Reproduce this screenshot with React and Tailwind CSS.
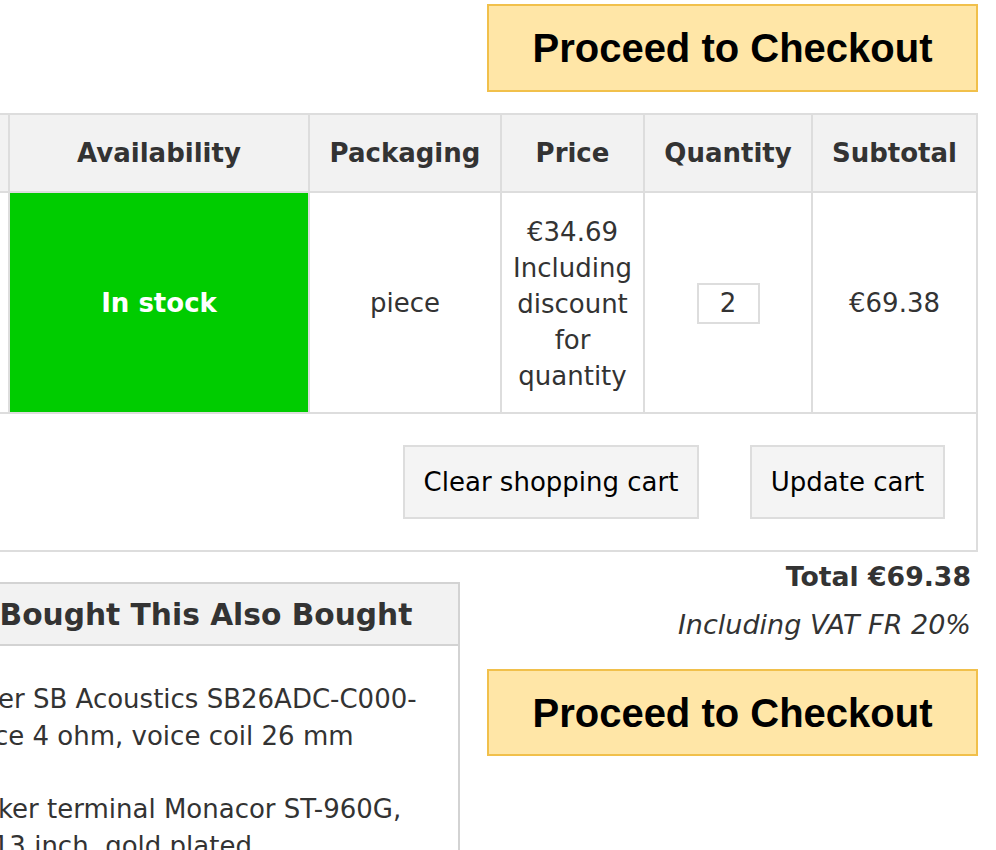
export default function App() {
  return (
    <div className="w-[996px] h-[850px] overflow-hidden bg-white font-['DejaVu_Sans',sans-serif] text-[#333333] text-[26px]">
      <div className="flex justify-end pr-[18px] pt-[4px]">
        <button className="w-[491px] h-[88px] border-2 border-[#f1c04b] bg-[#ffe6a7] text-[40px] font-bold text-black font-['Liberation_Sans',Arial,sans-serif]">
          Proceed to Checkout
        </button>
      </div>

      <div className="ml-[-60px] mt-[21px] w-[1038px] grid grid-cols-[66px_298px_190px_141px_166px_163px] grid-rows-[76px_219px_136px] gap-[2px] p-[2px] bg-[#dddddd]">
        <div className="bg-[#f2f2f2]"></div>
        <div className="bg-[#f2f2f2] flex items-center justify-center font-bold">Availability</div>
        <div className="bg-[#f2f2f2] flex items-center justify-center font-bold">Packaging</div>
        <div className="bg-[#f2f2f2] flex items-center justify-center font-bold">Price</div>
        <div className="bg-[#f2f2f2] flex items-center justify-center font-bold">Quantity</div>
        <div className="bg-[#f2f2f2] flex items-center justify-center font-bold">Subtotal</div>

        <div className="bg-white"></div>
        <div className="bg-[#00cc00] flex items-center justify-center font-bold text-white pt-[2px]">In stock</div>
        <div className="bg-white flex items-center justify-center pt-[2px]">piece</div>
        <div className="bg-white flex items-center justify-center text-center leading-[36px] px-[8px] pt-[2px]">
          <div>
            <div>€34.69</div>
            <div>Including discount for quantity</div>
          </div>
        </div>
        <div className="bg-white flex items-center justify-center pt-[2px]">
          <div className="w-[63px] h-[41px] border-2 border-[#dddddd] flex items-center justify-center">2</div>
        </div>
        <div className="bg-white flex items-center justify-center pt-[2px]">€69.38</div>

        <div className="col-span-6 bg-white flex items-center justify-end pr-[31px] gap-[51px]">
          <button className="w-[296px] h-[74px] border-2 border-[#dddddd] bg-[#f4f4f4] text-black text-[26px]">
            Clear shopping cart
          </button>
          <button className="w-[195px] h-[74px] border-2 border-[#dddddd] bg-[#f4f4f4] text-black text-[26px]">
            Update cart
          </button>
        </div>
      </div>

      <div className="flex items-start">
        <div className="ml-[-320px] w-[780px] shrink-0 mt-[30px] border-t-2 border-r-2 border-[#d3d3d3]">
          <div className="h-[62px] bg-[#f2f2f2] border-b-2 border-[#d3d3d3] flex items-center whitespace-nowrap text-[29.7px] font-bold pl-[46px] pt-[2px]">
            Customers Who Bought This Also Bought
          </div>
          <div className="pt-[35px] leading-[36.5px] whitespace-nowrap">
            <div className="ml-[243px]">Tweeter SB Acoustics SB26ADC-C000-</div>
            <div className="ml-[200px]">impedance 4 ohm, voice coil 26 mm</div>
            <div className="ml-[253px] mt-[37px]">Speaker terminal Monacor ST-960G,</div>
            <div className="ml-[288px]">0.13 inch, gold plated</div>
          </div>
        </div>
        <div className="ml-[27px] w-[491px] shrink-0 pt-[7px]">
          <div className="text-right pr-[7px] leading-[36px] font-bold text-[26.7px]">Total €69.38</div>
          <div className="text-right pr-[7px] leading-[36px] italic mt-[12px] text-[27px]">Including VAT FR 20%</div>
          <button className="mt-[26px] w-[491px] h-[87px] border-2 border-[#f1c04b] bg-[#ffe6a7] text-[40px] font-bold text-black font-['Liberation_Sans',Arial,sans-serif]">
            Proceed to Checkout
          </button>
        </div>
      </div>
    </div>
  );
}
